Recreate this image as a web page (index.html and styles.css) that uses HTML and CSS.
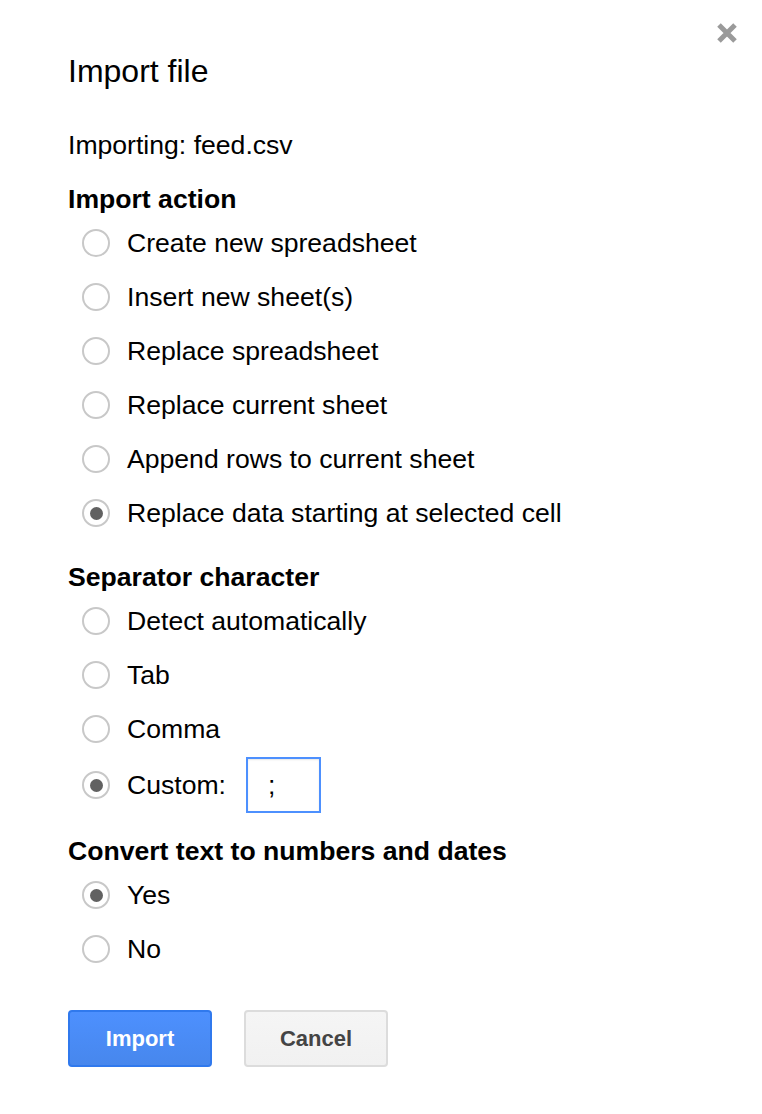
FILE: index.html
```html
<!DOCTYPE html>
<html>
<head>
<meta charset="utf-8">
<link rel="stylesheet" href="styles.css">
</head>
<body>
<div class="dialog">
  <button class="close" aria-label="Close">
    <svg width="22" height="22" viewBox="0 0 22 22"><path d="M3 3 L19 19 M19 3 L3 19" stroke="#9a9a9a" stroke-width="5" stroke-linecap="butt"/></svg>
  </button>
  <h1 class="title">Import file</h1>
  <div class="importing">Importing: feed.csv</div>

  <div class="heading">Import action</div>
  <div class="opt"><span class="radio"></span><span>Create new spreadsheet</span></div>
  <div class="opt"><span class="radio"></span><span>Insert new sheet(s)</span></div>
  <div class="opt"><span class="radio"></span><span>Replace spreadsheet</span></div>
  <div class="opt"><span class="radio"></span><span>Replace current sheet</span></div>
  <div class="opt"><span class="radio"></span><span>Append rows to current sheet</span></div>
  <div class="opt"><span class="radio checked"></span><span>Replace data starting at selected cell</span></div>

  <div class="heading">Separator character</div>
  <div class="opt"><span class="radio"></span><span>Detect automatically</span></div>
  <div class="opt"><span class="radio"></span><span>Tab</span></div>
  <div class="opt"><span class="radio"></span><span>Comma</span></div>
  <div class="opt custom"><span class="radio checked"></span><span>Custom:</span><span class="input">;</span></div>

  <div class="heading">Convert text to numbers and dates</div>
  <div class="opt"><span class="radio checked"></span><span>Yes</span></div>
  <div class="opt"><span class="radio"></span><span>No</span></div>

  <div class="buttons">
    <button class="btn primary">Import</button>
    <button class="btn">Cancel</button>
  </div>
</div>
</body>
</html>
```
FILE: styles.css
```css
html, body {
  margin: 0;
  padding: 0;
  background: #fff;
}
body {
  font-family: "Liberation Sans", Arial, sans-serif;
  color: #000;
}
.dialog {
  position: relative;
  width: 762px;
  height: 1114px;
  box-sizing: border-box;
  padding: 51px 0 0 68px;
}
.close {
  position: absolute;
  top: 22px;
  left: 716px;
  width: 22px;
  height: 22px;
  padding: 0;
  border: 0;
  background: none;
  display: block;
}
.close svg { display: block; }
.title {
  margin: 0;
  font-size: 32px;
  font-weight: normal;
  line-height: 40px;
}
.importing {
  margin-top: 37px;
  font-size: 26.6px;
  line-height: 34px;
}
.heading {
  margin-top: 20px;
  font-size: 26.6px;
  font-weight: bold;
  line-height: 34px;
}
.opt {
  height: 54px;
  display: flex;
  align-items: center;
  padding-left: 14px;
  font-size: 26.6px;
  line-height: 30px;
}
.opt.custom { height: 58px; }
.radio {
  width: 28px;
  height: 28px;
  box-sizing: border-box;
  border: 2px solid #c8c8c8;
  border-radius: 50%;
  margin-right: 17px;
  display: flex;
  align-items: center;
  justify-content: center;
  flex: none;
}
.radio.checked::after {
  content: "";
  width: 13px;
  height: 13px;
  border-radius: 50%;
  background: #616161;
}
.input {
  margin-left: 20px;
  width: 75px;
  height: 56px;
  box-sizing: border-box;
  border: 2px solid #4d90fe;
  box-shadow: inset 0 1px 2px rgba(0,0,0,0.1);
  padding-left: 20px;
  display: flex;
  align-items: center;
}
.buttons {
  margin-top: 34px;
  display: flex;
  gap: 32px;
}
.btn {
  width: 144px;
  height: 57px;
  box-sizing: border-box;
  border: 2px solid #dcdcdc;
  border-radius: 4px;
  background: linear-gradient(#f5f5f5, #f1f1f1);
  color: #444;
  font-family: "Liberation Sans", Arial, sans-serif;
  font-size: 22px;
  font-weight: bold;
  padding: 0;
}
.btn.primary {
  background: linear-gradient(#4d90fe, #4787ed);
  border-color: #3079ed;
  color: #fff;
}
```
